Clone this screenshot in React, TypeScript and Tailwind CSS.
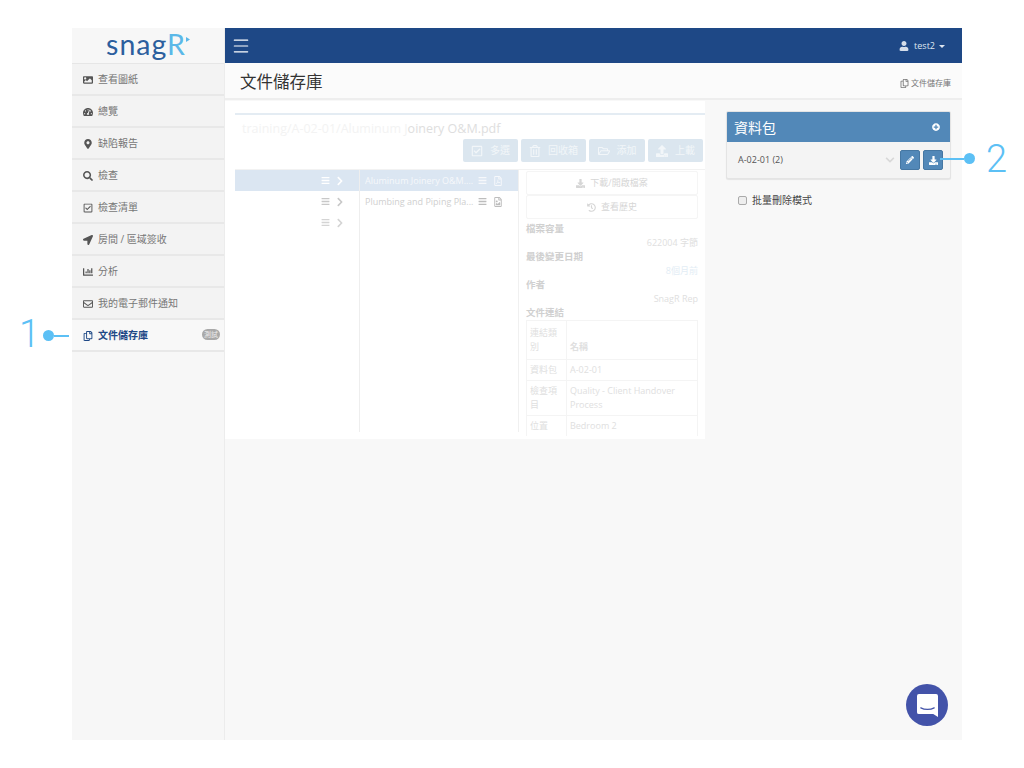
import { Menu } from "lucide-react";
import type { IconType } from "react-icons";
import {
  FaBars,
  FaChartBar,
  FaChevronDown,
  FaChevronRight,
  FaDownload,
  FaHistory,
  FaImage,
  FaLocationArrow,
  FaMapMarkerAlt,
  FaPencilAlt,
  FaPlusCircle,
  FaRegCheckSquare,
  FaRegCopy,
  FaRegEnvelope,
  FaRegFileImage,
  FaRegFilePdf,
  FaRegFolderOpen,
  FaRegTrashAlt,
  FaSearch,
  FaTachometerAlt,
  FaUpload,
  FaUser,
} from "react-icons/fa";

const nav: { label: string; icon: IconType }[] = [
  { label: "查看圖紙", icon: FaImage },
  { label: "總覽", icon: FaTachometerAlt },
  { label: "缺陷報告", icon: FaMapMarkerAlt },
  { label: "檢查", icon: FaSearch },
  { label: "檢查清單", icon: FaRegCheckSquare },
  { label: "房間 / 區域簽收", icon: FaLocationArrow },
  { label: "分析", icon: FaChartBar },
  { label: "我的電子郵件通知", icon: FaRegEnvelope },
];

function ToolButton({ icon: Icon, label, width }: { icon: IconType; label: string; width: string }) {
  return (
    <div className={`flex h-[23px] items-center justify-center gap-[7px] rounded-[2px] bg-[#dbe6ef] text-[10px] text-[#f2f6f9] ${width}`}>
      <Icon size={12} />
      <span>{label}</span>
    </div>
  );
}

export default function App() {
  return (
    <div className="relative h-[768px] w-[1024px] overflow-hidden bg-white pt-[28px] pl-[72px] font-['Open_Sans','Noto_Sans_CJK_TC',sans-serif]">
      <div className="flex h-[712px] w-[890px]">
        {/* sidebar */}
        <aside className="w-[153px] shrink-0 border-r border-[#ececec] bg-[#f7f7f7]">
          <div className="flex h-[36px] items-center justify-center border-b border-[#e6e6e6] pb-[3px]">
            <span className="text-[28.500px] leading-none tracking-[1px] text-[#2c5f9e] font-['Lato','Noto_Sans',sans-serif]">
              snag<span className="text-[#5bb8e8]">R</span>
            </span>
            <svg width="4" height="5" viewBox="0 0 4 5" className="mt-[-9px]">
              <path d="M0 0l4 2.500L0 5z" fill="#5bb8e8" />
            </svg>
          </div>
          {nav.map((n) => (
            <div key={n.label} className="flex h-[32px] items-center border-b-2 border-[#e8e8e8] bg-[#f3f3f3] pt-[1px] pl-[11px] text-[10px] text-[#777]">
              <span className="mr-[5px] flex w-[10px] justify-center text-[#555]">
                <n.icon size={10} />
              </span>
              <span>{n.label}</span>
            </div>
          ))}
          <div className="flex h-[32px] items-center border-b-2 border-[#e8e8e8] bg-[#f8f8f8] pt-[1px] pl-[11px] text-[10px] font-bold text-[#1e4886]">
            <FaRegCopy size={10} className="mr-[5px]" />
            <span>文件儲存庫</span>
            <span className="mt-[-2px] mr-[4px] ml-auto rounded-full bg-[#a9a9a9] px-[2px] text-[7px] leading-[11px] font-normal text-[#eee]">測試</span>
          </div>
        </aside>

        <div className="flex min-w-0 flex-1 flex-col bg-[#f8f8f8]">
          {/* top bar */}
          <header className="flex h-[35px] shrink-0 items-center justify-between bg-[#1e4886] pr-[17px] pl-[6px] text-white">
            <Menu size={20} strokeWidth={1.4} />
            <div className="flex items-center gap-[4px] text-[9px]">
              <FaUser size={10} className="mr-[1px] text-[#d5deea]" />
              <span className="text-[#dfe6f0]">test2</span>
              <span className="mt-[1px] border-x-[3px] border-t-[3px] border-x-transparent border-t-[#dfe6f0]" />
            </div>
          </header>

          {/* page title */}
          <div className="flex h-[37px] shrink-0 items-center justify-between border-b-2 border-[#eeeeee] bg-[#fbfbfb] pt-[3px] pr-[11px] pl-[15px]">
            <h1 className="text-[16.500px] text-[#333]">文件儲存庫</h1>
            <div className="flex items-center gap-[2px] pt-[2px] text-[8px] text-[#777]">
              <FaRegCopy size={9} />
              <span>文件儲存庫</span>
            </div>
          </div>

          <div className="flex items-start">
            {/* faded repository panel */}
            <section className="mt-[1px] h-[338px] w-[480px] shrink-0 bg-white pt-[12px] pl-[10px]">
              <div className="h-[2px] w-[470px] bg-[#e4ecf3]" />
              <div className="mt-[5px] h-[18px] pl-[7px] text-[12.500px] leading-[18px]">
                <span className="text-[#f3f3f3]">training/A-02-01/Aluminum J</span>
                <span className="text-[#dedede]">oinery O&amp;M.pdf</span>
              </div>
              <div className="mt-[1px] flex justify-end gap-[3px] pr-[2px]">
                <ToolButton icon={FaRegCheckSquare} label="多選" width="w-[55px]" />
                <ToolButton icon={FaRegTrashAlt} label="回收箱" width="w-[65px]" />
                <ToolButton icon={FaRegFolderOpen} label="添加" width="w-[56px]" />
                <ToolButton icon={FaUpload} label="上載" width="w-[55px]" />
              </div>

              <div className="mt-[7px] flex h-[263px] border-t border-[#f2f2f2]">
                <div className="w-[125px] shrink-0 border-r border-[#eeeeee]">
                  <div className="flex h-[21px] items-center justify-end gap-[5px] bg-[#dbe6f2] pr-[14px] text-white">
                    <FaBars size={9} />
                    <FaChevronRight size={10} />
                  </div>
                  <div className="flex h-[21px] items-center justify-end gap-[5px] pr-[14px] text-[#c8c8c8]">
                    <FaBars size={9} />
                    <FaChevronRight size={10} />
                  </div>
                  <div className="flex h-[21px] items-center justify-end gap-[5px] pr-[14px] text-[#d4d4d4]">
                    <FaBars size={9} />
                    <FaChevronRight size={10} />
                  </div>
                </div>
                <div className="w-[158px] shrink-0 text-[9px]">
                  <div className="flex h-[21px] items-center bg-[#dbe6f2] pr-[15px] pl-[5px] text-[#f6f8fb]">
                    <span className="flex-1 truncate">Aluminum Joinery O&amp;M....</span>
                    <FaBars size={9} className="ml-[3px]" />
                    <FaRegFilePdf size={10} className="ml-[6px]" />
                  </div>
                  <div className="flex h-[21px] items-center pr-[15px] pl-[5px] text-[#cfcfcf]">
                    <span className="flex-1 truncate">Plumbing and Piping Pla...</span>
                    <FaBars size={9} className="ml-[3px] text-[#bdbdbd]" />
                    <FaRegFileImage size={10} className="ml-[6px] text-[#bdbdbd]" />
                  </div>
                </div>
                <div className="w-[187px] shrink-0 border-l border-[#f0f0f0] px-[7px] pt-[1px] text-[9px] text-[#d6d6d6]">
                  <div className="flex h-[24px] items-center justify-center gap-[5px] rounded-[2px] border border-[#f5f5f5]">
                    <FaDownload size={9} />
                    <span>下載/開啟檔案</span>
                  </div>
                  <div className="flex h-[24px] items-center justify-center gap-[5px] rounded-[2px] border border-[#f5f5f5]">
                    <FaHistory size={9} />
                    <span>查看歷史</span>
                  </div>
                  <div className="mt-[3px] text-[9.500px] leading-[14px] font-semibold text-[#d0d0d0]">檔案容量</div>
                  <div className="text-right leading-[14px] text-[#e0e0e0]">622004 字節</div>
                  <div className="text-[9.500px] leading-[14px] font-semibold text-[#d0d0d0]">最後變更日期</div>
                  <div className="text-right leading-[14px] text-[#e3edf5]">8個月前</div>
                  <div className="text-[9.500px] leading-[14px] font-semibold text-[#d0d0d0]">作者</div>
                  <div className="text-right leading-[14px] text-[#e0e0e0]">SnagR Rep</div>
                  <div className="text-[9.500px] leading-[14px] font-semibold text-[#d0d0d0]">文件連結</div>
                  <div className="grid grid-cols-[40px_1fr] border border-b-0 border-[#f4f4f4] leading-[14px] text-[#e0e0e0]">
                    <div className="border-r border-b border-[#f4f4f4] px-[3px] py-[5px]">連結類別</div>
                    <div className="flex items-end border-b border-[#f4f4f4] px-[3px] py-[5px] font-semibold">名稱</div>
                    <div className="border-r border-b border-[#f4f4f4] px-[3px] py-[3px]">資料包</div>
                    <div className="border-b border-[#f4f4f4] px-[3px] py-[3px]">A-02-01</div>
                    <div className="border-r border-b border-[#f4f4f4] px-[3px] py-[3px]">檢查項目</div>
                    <div className="border-b border-[#f4f4f4] px-[3px] py-[3px]">Quality - Client Handover Process</div>
                    <div className="border-r border-[#f4f4f4] px-[3px] py-[3px]">位置</div>
                    <div className="px-[3px] py-[3px]">Bedroom 2</div>
                  </div>
                </div>
              </div>
            </section>

            {/* data package panel */}
            <section className="mt-[11px] ml-[21px] w-[225px] shrink-0">
              <div className="overflow-hidden rounded-[2px] border border-[#e4e4e4] bg-[#f4f4f4] shadow-[0_1px_1px_rgba(0,0,0,0.08)]">
                <div className="flex h-[30px] items-center justify-between bg-[#5288b8] pr-[10px] pl-[7px] text-white">
                  <span className="text-[14px]">資料包</span>
                  <FaPlusCircle size={8} />
                </div>
                <div className="flex h-[36px] items-center pr-[7px] pl-[11px] text-[9px] text-[#555]">
                  <span className="flex-1">A-02-01 (2)</span>
                  <FaChevronDown size={10} className="mr-[5px] text-[#d8d8d8]" />
                  <div className="flex h-[20px] w-[20px] items-center justify-center rounded-[2px] border border-[#4577a3] bg-[#5288b8] text-white">
                    <FaPencilAlt size={8} />
                  </div>
                  <div className="ml-[3px] flex h-[20px] w-[20px] items-center justify-center rounded-[2px] border border-[#4577a3] bg-[#5288b8] text-white">
                    <FaDownload size={9} />
                  </div>
                </div>
              </div>
              <label className="mt-[14px] flex items-center pl-[12px] text-[10px] text-[#444]">
                <span className="mr-[5px] h-[9px] w-[9px] rounded-[2px] border border-[#aaa] bg-[#eee]" />
                批量刪除模式
              </label>
            </section>
          </div>
        </div>
      </div>

      {/* callouts */}
      <div className="absolute top-[315px] left-[19px] text-[38px] leading-[38px] font-light text-[#5cc0f5] font-['Roboto',sans-serif]">1</div>
      <div className="absolute top-[330px] left-[43px] flex items-center">
        <div className="h-[11px] w-[11px] rounded-full bg-[#5cc0f5]" />
        <div className="h-[2px] w-[15px] bg-[#5cc0f5]" />
      </div>
      <div className="absolute top-[140px] left-[986px] text-[38px] leading-[38px] font-light text-[#5cc0f5] font-['Roboto',sans-serif]">2</div>
      <div className="absolute top-[153px] left-[940px] flex items-center">
        <div className="h-[2px] w-[24px] bg-[#5cc0f5]" />
        <div className="h-[11px] w-[11px] rounded-full bg-[#5cc0f5]" />
      </div>

      {/* chat launcher */}
      <div className="absolute top-[684px] left-[906px] flex h-[42px] w-[42px] items-center justify-center rounded-full bg-[#4353a9]">
        <svg width="21" height="23" viewBox="0 0 22 24">
          <path d="M2 0h18a2 2 0 0 1 2 2v22l-5-3H2a2 2 0 0 1-2-2V2a2 2 0 0 1 2-2z" fill="#fff" />
          <path d="M4 14.500c4 2.200 10 2.200 14 0" fill="none" stroke="#4353a9" strokeWidth="1.300" strokeLinecap="round" />
        </svg>
      </div>
    </div>
  );
}
